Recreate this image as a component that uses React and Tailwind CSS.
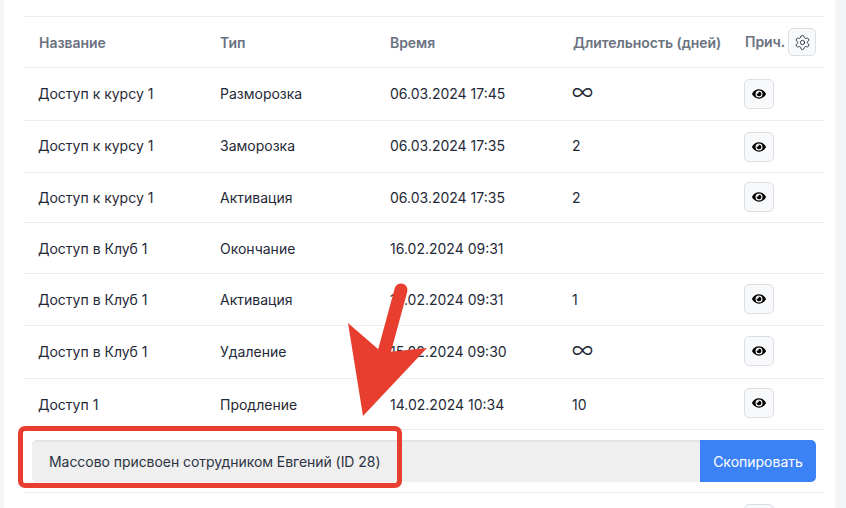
import React from 'react';
import { FaEye } from 'react-icons/fa';
import { Settings } from 'lucide-react';

const rows = [
  { name: 'Доступ к курсу 1', type: 'Разморозка', time: '06.03.2024 17:45', days: '∞', eye: true, h: 'h-[53px]', text: 'pb-[2px]', icon: '' },
  { name: 'Доступ к курсу 1', type: 'Заморозка', time: '06.03.2024 17:35', days: '2', eye: true, h: 'h-[52px]', text: 'pb-[2px]', icon: '' },
  { name: 'Доступ к курсу 1', type: 'Активация', time: '06.03.2024 17:35', days: '2', eye: true, h: 'h-[50px]', text: '', icon: 'pb-[2px]' },
  { name: 'Доступ в Клуб 1', type: 'Окончание', time: '16.02.2024 09:31', days: '', eye: false, h: 'h-[51px]', text: '', icon: '' },
  { name: 'Доступ в Клуб 1', type: 'Активация', time: '16.02.2024 09:31', days: '1', eye: true, h: 'h-[52px]', text: '', icon: 'pb-[2px]' },
  { name: 'Доступ в Клуб 1', type: 'Удаление', time: '15.02.2024 09:30', days: '∞', eye: true, h: 'h-[53px]', text: 'pb-[2px]', icon: 'pb-[2px]' },
  { name: 'Доступ 1', type: 'Продление', time: '14.02.2024 10:34', days: '10', eye: true, h: 'h-[51px]', text: '', icon: 'pb-[2px]' },
];

const EyeButton = () => (
  <button className="flex h-[30px] w-[30px] items-center justify-center rounded-[5px] border border-[#dcdfe4] bg-[#f8f9fb] text-black">
    <FaEye className="h-[14px] w-[14px]" />
  </button>
);

export default function App() {
  return (
    <div className="relative h-[508px] w-[846px] overflow-hidden bg-[#f4f5f7] font-['Inter',sans-serif] text-[14px] text-[#1f2937]">
      <div className="ml-[4px] mr-[11px] h-full bg-white px-[20px] pt-[16px]">
        <table className="w-[800px] table-fixed border-collapse">
          <colgroup>
            <col className="w-[182px]" />
            <col className="w-[170px]" />
            <col className="w-[182px]" />
            <col className="w-[172px]" />
            <col className="w-[94px]" />
          </colgroup>
          <thead>
            <tr className="h-[51px] border-y border-[#eceef1] text-left tracking-[-0.05px] text-[#6b7280]">
              <th className="pl-[15px] pt-[1px] font-semibold">Название</th>
              <th className="pl-[14px] pt-[1px] font-semibold">Тип</th>
              <th className="pl-[14px] pt-[1px] font-semibold">Время</th>
              <th className="pl-[15px] pt-[1px] font-semibold whitespace-nowrap">Длительность (дней)</th>
              <th className="pl-[15px] font-semibold">
                <div className="flex items-center gap-[3px]">
                  <span className="relative top-[-1px]">Прич.</span>
                  <button className="flex h-[28px] w-[28px] items-center justify-center rounded-[5px] border border-[#dcdfe4] bg-[#f8f9fb] text-[#1f2937]">
                    <Settings className="h-[17px] w-[17px]" strokeWidth={1.25} />
                  </button>
                </div>
              </th>
            </tr>
          </thead>
          <tbody>
            {rows.map((r, i) => (
              <tr key={i} className={`${r.h} border-b border-[#eceef1]`}>
                <td className={`${r.text} pl-[14px]`}>{r.name}</td>
                <td className={`${r.text} pl-[14px]`}>{r.type}</td>
                <td className={`${r.text} pl-[14px]`}>{r.time}</td>
                <td className={`${r.text} pl-[14px]`}>
                  {r.days === '∞' ? <span className="font-['Noto_Sans_CJK_SC',sans-serif] text-[21px] leading-none">∞</span> : r.days}
                </td>
                <td className={`${r.icon} pl-[14px]`}>{r.eye && <EyeButton />}</td>
              </tr>
            ))}
            <tr className="h-[63px] border-b border-[#eceef1]">
              <td colSpan={5} className="px-[8px]">
                <div className="flex h-[42px]">
                  <div className="flex flex-1 items-center rounded-l-[5px] border-t-2 border-[#e2e3e6] bg-[#efeff0] pb-[1px] pl-[17px] tracking-[-0.05px] text-[#2b3340]">
                    Массово присвоен сотрудником Евгений (ID 28)
                  </div>
                  <button className="w-[116px] rounded-r-[5px] bg-[#3b82f6] text-white">Скопировать</button>
                </div>
              </td>
            </tr>
            <tr>
              <td colSpan={4} />
              <td className="pl-[14px] pt-[11px]"><EyeButton /></td>
            </tr>
          </tbody>
        </table>
      </div>

      {/* red annotation on top of the table */}
      <div className="absolute left-[18px] top-[426px] h-[62px] w-[384px] rounded-[7px] border-[5px] border-[#e83e30]" />
      <svg className="absolute left-0 top-0" width="846" height="508" fill="none">
        <line x1="401" y1="290" x2="382" y2="360" stroke="#e83e30" strokeWidth="13" strokeLinecap="round" />
        <polygon points="348,323 378,349 388,352 427,348 363,416" fill="#e83e30" />
      </svg>
    </div>
  );
}
